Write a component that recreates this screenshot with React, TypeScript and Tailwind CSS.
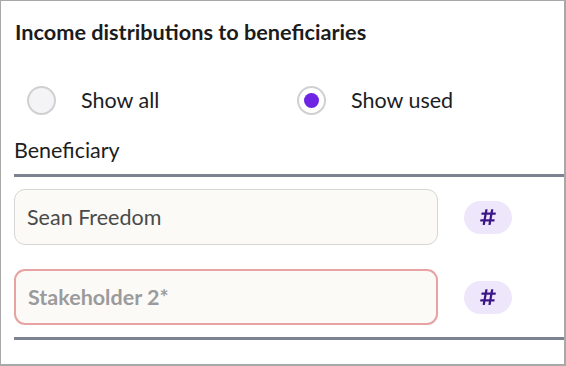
import React from 'react';
import { FaHashtag } from 'react-icons/fa';

function Radio({ label, checked }: { label: string; checked?: boolean }) {
  return (
    <label className="flex h-[32px] items-center gap-[25px]">
      <span
        className={`flex h-[29px] w-[29px] items-center justify-center rounded-full border-[2.5px] border-[#d0d0d3] ${
          checked ? 'bg-white' : 'bg-[#f4f4f6]'
        }`}
      >
        {checked && <span className="h-[15px] w-[15px] rounded-full bg-[#6d24e3]" />}
      </span>
      <span className="text-[21.5px] leading-[32px] text-[#1d1d1f]">{label}</span>
    </label>
  );
}

function Row({ value, placeholder, error }: { value?: string; placeholder?: string; error?: boolean }) {
  return (
    <div className="flex items-center">
      <div
        className={`flex h-[56px] w-[424px] items-center rounded-[11px] bg-[#fbfaf7] px-[12px] ${
          error ? 'border-2 border-[#e7a3a3]' : 'border border-[#d6d6d3]'
        }`}
      >
        {value ? (
          <span className="text-[21.5px] text-[#4a4a4a]">{value}</span>
        ) : (
          <span className="text-[21.5px] font-bold text-[#9b9b9b]">{placeholder}</span>
        )}
      </div>
      <span className="ml-[26px] flex h-[33px] w-[48px] items-center justify-center rounded-full bg-[#eee6fb] text-[#3d1688]">
        <FaHashtag className="h-[18px] w-[18px]" />
      </span>
    </div>
  );
}

export default function App() {
  return (
    <div
      className="h-[366px] w-[566px] overflow-hidden border border-r-2 border-b-2 border-[#a8a8a8] bg-white pl-[13px]"
      style={{ fontFamily: 'Lato, "Open Sans", sans-serif' }}
    >
      <h3 className="pt-[15px] pl-[1px] text-[21.7px] leading-[33px] font-bold text-[#1c1c1c]">
        Income distributions to beneficiaries
      </h3>
      <div className="mt-[35px] flex items-center pl-[13px]">
        <div className="w-[270px]">
          <Radio label="Show all" />
        </div>
        <Radio label="Show used" checked />
      </div>
      <div className="mt-[18px] text-[21.5px] leading-[32px] text-[#1d1d1f]">Beneficiary</div>
      <div className="mt-[8px] h-[3px] bg-[#7c8291]" />
      <div className="mt-[12px] flex flex-col gap-[24px]">
        <Row value="Sean Freedom" />
        <Row placeholder="Stakeholder 2*" error />
      </div>
      <div className="mt-[12px] h-[3px] bg-[#7c8291]" />
    </div>
  );
}
